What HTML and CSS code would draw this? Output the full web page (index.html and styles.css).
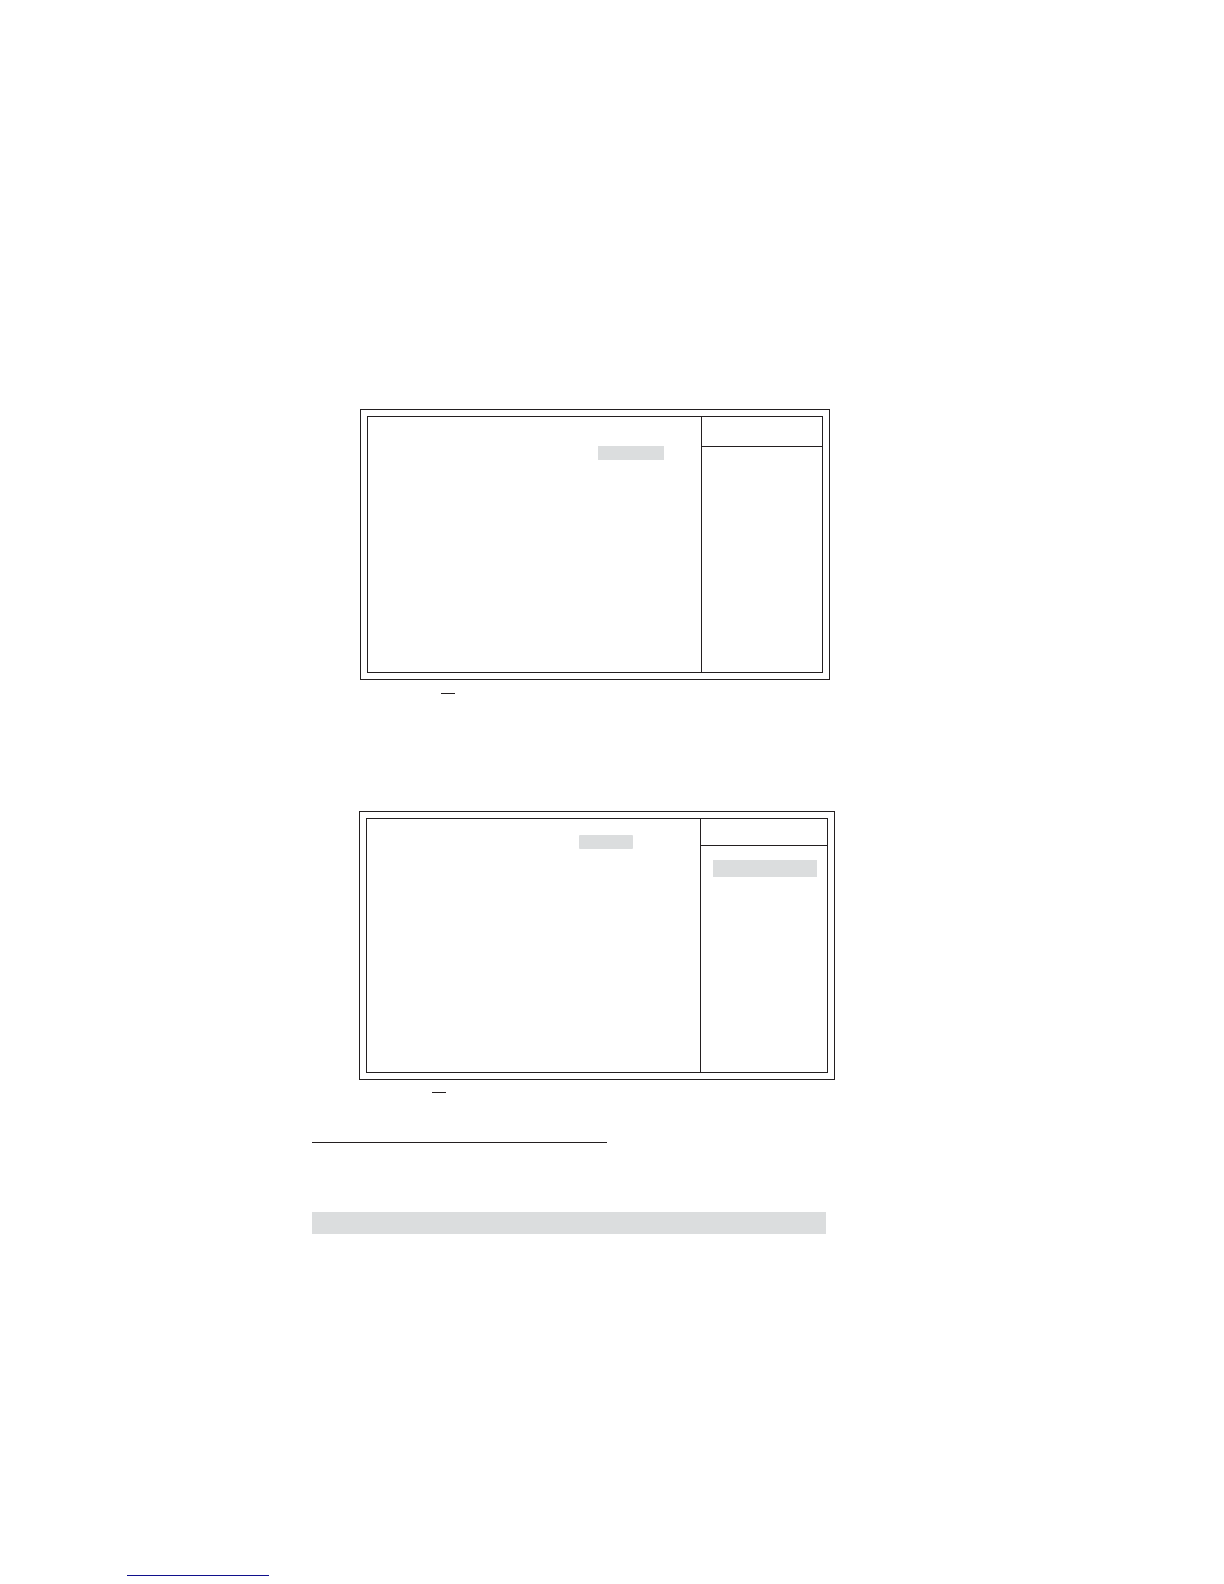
FILE: index.html
```
<!DOCTYPE html>
<html lang="en">
<head>
    <meta charset="utf-8">
    <title>Setup Screens</title>
    <link rel="stylesheet" href="styles.css">
</head>
<body>
    <main>
        <!-- first setup screen -->
        <section class="screen screen-first">
            <div class="screen-inner">
                <div class="options">
                    <div class="highlight"></div>
                </div>
                <div class="help">
                    <div class="help-title"></div>
                </div>
            </div>
        </section>
        <hr class="dash dash-first">

        <!-- second setup screen -->
        <section class="screen screen-second">
            <div class="screen-inner">
                <div class="options">
                    <div class="highlight"></div>
                </div>
                <div class="help">
                    <div class="help-title"></div>
                    <div class="help-highlight"></div>
                </div>
            </div>
        </section>
        <hr class="dash dash-second">

        <hr class="heading-line">
        <div class="band"></div>
    </main>
    <footer>
        <hr class="link-line">
    </footer>
</body>
</html>
```
FILE: styles.css
```
* {
    box-sizing: border-box;
}

body {
    margin: 0;
    background-color: #fff;
    font-family: "Liberation Sans", Arial, sans-serif;
}

main {
    padding: 409px 389px 0 312px;
}

hr {
    height: 1px;
    margin: 0;
    border: none;
    background-color: #231f20;
}

.screen {
    padding: 6px;
    border: 1px solid #231f20;
}

.screen-first {
    margin: 0 5px 13px 48px;
}

.screen-second {
    margin: 0 0 12px 47px;
}

.screen-inner {
    display: grid;
    border: 1px solid #231f20;
}

.screen-first .screen-inner {
    grid-template-columns: 1fr 121px;
    min-height: 257px;
}

.screen-second .screen-inner {
    grid-template-columns: 1fr 127px;
    min-height: 255px;
}

.options {
    display: flex;
    justify-content: flex-end;
    align-items: flex-start;
}

.screen-first .options {
    padding: 29px 37px 0 0;
}

.screen-second .options {
    padding: 16px 67px 0 0;
}

.highlight,
.help-highlight,
.band {
    background-color: #dbddde;
}

.highlight {
    width: 66px;
    height: 14px;
}

.screen-second .highlight {
    width: 54px;
    border-radius: 1px;
}

.help {
    border-left: 1px solid #231f20;
}

.help-title {
    height: 30px;
    border-bottom: 1px solid #231f20;
}

.screen-second .help-title {
    height: 27px;
}

.help-highlight {
    height: 17px;
    margin: 14px 10px 0 12px;
}

.dash {
    width: 14px;
}

.dash-first {
    margin: 0 0 117px 129px;
}

.dash-second {
    margin: 0 0 49px 120px;
}

.heading-line {
    width: 295px;
    margin-bottom: 69px;
}

.band {
    height: 22px;
    margin-right: 9px;
}

footer {
    padding: 341px 0 8px 127px;
}

.link-line {
    width: 142px;
    background-color: #10108c;
}
```
